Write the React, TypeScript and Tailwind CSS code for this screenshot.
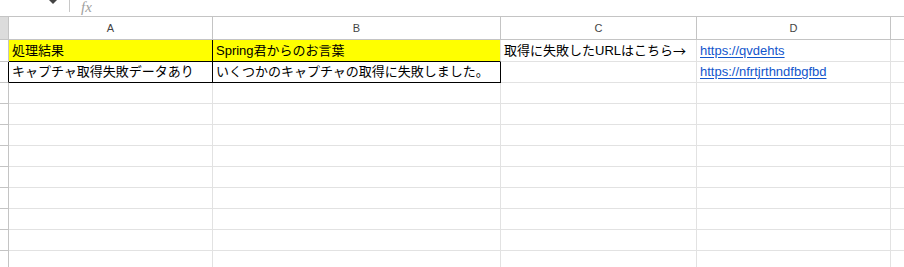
import React from 'react'

const font = { fontFamily: '"Liberation Sans", "Noto Sans CJK JP", sans-serif' }

const cols = [
  { key: 'A', w: 'w-[204px]' },
  { key: 'B', w: 'w-[288px]' },
  { key: 'C', w: 'w-[196px]' },
  { key: 'D', w: 'w-[194px]' },
]

const Link = ({ children }: { children: React.ReactNode }) => (
  <span className="text-[#1155cc] underline underline-offset-[2px]">{children}</span>
)

const EmptyRow = () => (
  <div className="flex h-[21px] shrink-0">
    <div className="w-[9px] shrink-0 border-r border-b border-[#c4c4c4]" />
    {cols.map((c) => (
      <div key={c.key} className={`${c.w} shrink-0 border-r border-b border-[#e2e2e2]`} />
    ))}
    <div className="flex-1 border-b border-[#e2e2e2]" />
  </div>
)

const App = () => {
  return (
    <div className="w-[904px] h-[267px] overflow-hidden bg-white flex flex-col text-[13px] text-black" style={font}>
      {/* toolbar remnant */}
      <div className="h-[17px] shrink-0 border-b border-[#c4c4c4] flex items-start">
        <div className="ml-[48px] w-0 h-0 border-l-[5px] border-r-[5px] border-t-[5px] border-l-transparent border-r-transparent border-t-[#444] mt-[-1px]" />
        <div className="ml-[11px] w-px h-[12px] bg-[#c8c8c8]" />
        <span
          className="ml-[11px] text-[15px] italic text-[#a0a0a0] leading-none"
          style={{ fontFamily: '"Liberation Serif", serif' }}
        >
          fx
        </span>
      </div>

      {/* column header */}
      <div className="flex h-[23px] shrink-0 border-b border-[#c4c4c4]">
        <div className="w-[9px] shrink-0 bg-[#dcdcdc] border-r border-[#c4c4c4]" />
        {cols.map((c) => (
          <div
            key={c.key}
            className={`${c.w} shrink-0 border-r border-[#c4c4c4] flex items-center justify-center text-[11px] text-[#444] pt-px`}
          >
            {c.key}
          </div>
        ))}
        <div className="flex-1" />
      </div>

      {/* row 1 */}
      <div className="flex h-[22px] shrink-0">
        <div className="w-[9px] shrink-0 border-r border-b border-r-[#c4c4c4] border-b-[#c4c4c4]" />
        <div className="w-[204px] shrink-0 bg-[#ffff00] border-r border-b border-black flex items-end px-[3px] pb-[2px] leading-[17px]">
          処理結果
        </div>
        <div className="w-[288px] shrink-0 bg-[#ffff00] border-r border-b border-r-[#e2e2e2] border-b-black flex items-end px-[3px] pb-[2px] leading-[17px]">
          Spring君からのお言葉
        </div>
        <div className="w-[196px] shrink-0 border-r border-b border-[#e2e2e2] flex items-end px-[3px] pb-[2px] leading-[17px] whitespace-nowrap">
          取得に失敗したURLはこちら
          <span style={{ fontFamily: '"Noto Sans CJK JP", sans-serif' }}>→</span>
        </div>
        <div className="w-[194px] shrink-0 border-r border-b border-[#e2e2e2] flex items-end px-[3px] pb-[2px] leading-[17px]">
          <Link>https://qvdehts</Link>
        </div>
        <div className="flex-1 border-b border-[#e2e2e2]" />
      </div>

      {/* row 2 */}
      <div className="flex h-[21px] shrink-0">
        <div className="w-[9px] shrink-0 border-r border-b border-r-black border-b-[#c4c4c4]" />
        <div className="w-[204px] shrink-0 border-r border-b border-black flex items-end px-[3px] pb-[2px] leading-[17px]">
          キャプチャ取得失敗データあり
        </div>
        <div className="w-[288px] shrink-0 border-r border-b border-black flex items-end px-[3px] pb-[2px] leading-[17px] whitespace-nowrap">
          いくつかのキャプチャの取得に失敗しました。
        </div>
        <div className="w-[196px] shrink-0 border-r border-b border-[#e2e2e2]" />
        <div className="w-[194px] shrink-0 border-r border-b border-[#e2e2e2] flex items-end px-[3px] pb-[2px] leading-[17px]">
          <Link>https://nfrtjrthndfbgfbd</Link>
        </div>
        <div className="flex-1 border-b border-[#e2e2e2]" />
      </div>

      {Array.from({ length: 10 }).map((_, i) => (
        <EmptyRow key={i} />
      ))}
    </div>
  )
}

export default App
